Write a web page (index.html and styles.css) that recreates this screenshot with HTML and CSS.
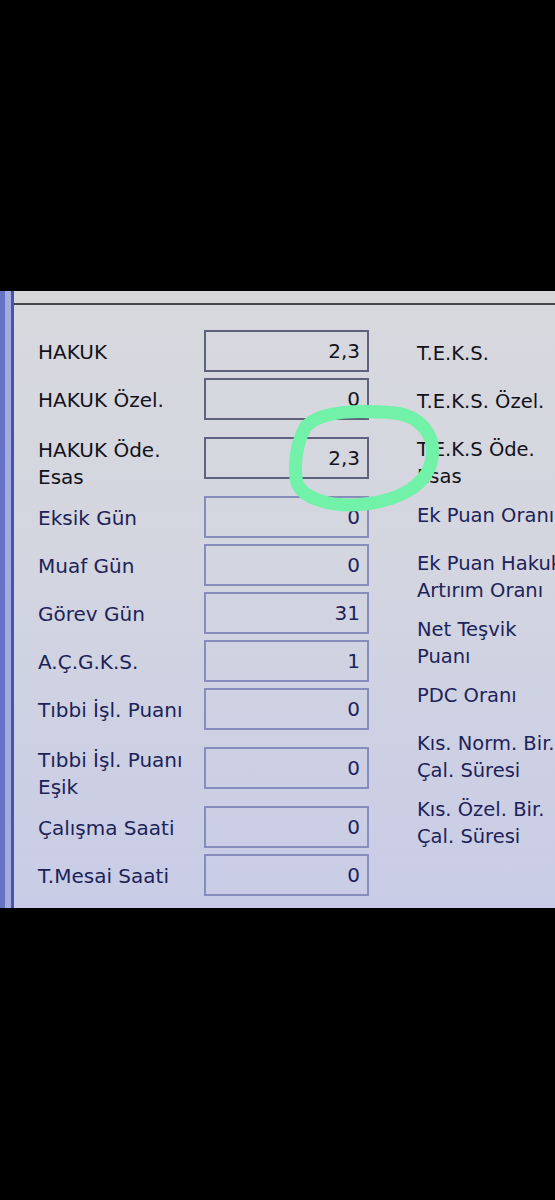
FILE: index.html
```html
<!DOCTYPE html>
<html lang="tr">
<head>
    <meta charset="UTF-8">
    <meta name="viewport" content="width=device-width, initial-scale=1.0">
    <title>HAKUK</title>
    <link rel="stylesheet" href="styles.css">
</head>
<body>

<!-- Photo of the screen -->
<div class="screen">
    <div class="band"></div>

    <div class="content">
        <div class="strip"></div>

        <!-- Left fields -->
        <div class="fields">
            <div class="row top">
                <span class="label">HAKUK</span>
                <span class="box">2,3</span>
            </div>
            <div class="row top">
                <span class="label">HAKUK Özel.</span>
                <span class="box">0</span>
            </div>
            <div class="row top tall">
                <span class="label">HAKUK Öde.<br>Esas</span>
                <span class="box">2,3</span>
            </div>
            <div class="row">
                <span class="label">Eksik Gün</span>
                <span class="box">0</span>
            </div>
            <div class="row">
                <span class="label">Muaf Gün</span>
                <span class="box">0</span>
            </div>
            <div class="row">
                <span class="label">Görev Gün</span>
                <span class="box">31</span>
            </div>
            <div class="row">
                <span class="label">A.Ç.G.K.S.</span>
                <span class="box">1</span>
            </div>
            <div class="row">
                <span class="label">Tıbbi İşl. Puanı</span>
                <span class="box">0</span>
            </div>
            <div class="row tall">
                <span class="label">Tıbbi İşl. Puanı<br>Eşik</span>
                <span class="box">0</span>
            </div>
            <div class="row">
                <span class="label">Çalışma Saati</span>
                <span class="box">0</span>
            </div>
            <div class="row">
                <span class="label">T.Mesai Saati</span>
                <span class="box">0</span>
            </div>
        </div>

        <!-- Right labels -->
        <div class="side">
            <div class="item top">T.E.K.S.</div>
            <div class="item top">T.E.K.S. Özel.</div>
            <div class="item top two">T.E.K.S Öde.<br>Esas</div>
            <div class="item">Ek Puan Oranı</div>
            <div class="item two">Ek Puan Hakuk<br>Artırım Oranı</div>
            <div class="item two">Net Teşvik<br>Puanı</div>
            <div class="item">PDC Oranı</div>
            <div class="item two">Kıs. Norm. Bir.<br>Çal. Süresi</div>
            <div class="item two">Kıs. Özel. Bir.<br>Çal. Süresi</div>
        </div>
    </div>

    <!-- Hand drawn mark -->
    <svg class="mark" viewBox="0 291 555 617" width="555" height="617">
        <path d="M305 428 C318 410 360 410 395 413 C420 416 436 435 432 458 C428 485 400 500 365 504 C330 508 298 498 296 478 C294 458 298 440 306 426"
              fill="none" stroke="#72f1a9" stroke-width="13" stroke-linecap="round"/>
    </svg>
</div>

</body>
</html>
```

FILE: styles.css
```css
body {
    margin: 0;
    padding: 291px 0 292px 0;
    background-color: #000;
    font-family: "DejaVu Sans", Verdana, sans-serif;
}
.screen {
    position: relative;
    width: 555px;
    height: 617px;
    overflow: hidden;
    background: linear-gradient(to bottom, #d8d9de, #d3d5e0 45%, #c8cce6);
}
.band {
    height: 12px;
    background-color: #d6d6d9;
    border-bottom: 2px solid #45464c;
    margin-left: 14px;
}
.content {
    display: flex;
    padding-top: 25px;
    height: 100%;
}
.strip {
    position: absolute;
    top: 0;
    left: 0;
    width: 14px;
    height: 100%;
    background: linear-gradient(to right, #6672c6 0 5px, #a4acdc 5px 11px, #4654b6 11px 14px);
}
.fields {
    display: flex;
    flex-direction: column;
    gap: 6px;
    margin-left: 38px;
}
.row {
    display: flex;
    align-items: center;
    height: 42px;
}
.row.tall {
    margin: 11px 0;
}
.label {
    width: 166px;
    font-size: 20px;
    line-height: 27px;
    padding-top: 3px;
    color: #1d2358;
    white-space: nowrap;
}
.row.tall .label {
    align-self: flex-start;
    padding-top: 0;
}
.row.top .label {
    color: #121218;
}
.box {
    box-sizing: border-box;
    width: 165px;
    height: 42px;
    border: 2px solid #868cbc;
    padding-right: 7px;
    text-align: right;
    font-size: 20px;
    line-height: 38px;
    color: #1d2358;
}
.row.top .box {
    border-color: #5e627c;
    color: #14141c;
}
.side {
    margin-left: 48px;
    padding-top: 10px;
    white-space: nowrap;
}
.item {
    min-height: 48px;
    font-size: 19.5px;
    line-height: 27px;
    color: #1d2358;
}
.item.two {
    padding-bottom: 12px;
}
.item.top {
    color: #121218;
}
.mark {
    position: absolute;
    top: 0;
    left: 0;
}
```
